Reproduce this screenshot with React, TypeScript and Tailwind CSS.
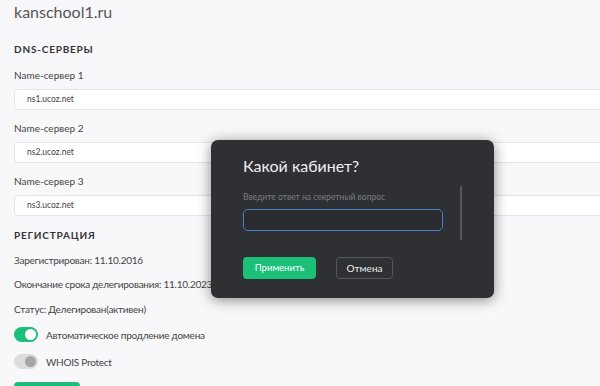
const servers = ["ns1.ucoz.net", "ns2.ucoz.net", "ns3.ucoz.net"];

const Toggle = ({ on }: { on: boolean }) => (
  <div
    className={`w-[24px] h-[15px] rounded-full flex items-center justify-end px-[2px] ${
      on ? "bg-[#1cbf78]" : "bg-[#dcdcdf]"
    }`}
  >
    <div className={`w-[11px] h-[11px] rounded-full ${on ? "bg-white" : "bg-[#a5a5aa]"}`} />
  </div>
);

export default function App() {
  return (
    <div
      className="relative w-[600px] h-[386px] overflow-hidden bg-[#f8f8fa] text-[#333]"
      style={{ fontFamily: 'Lato, "Open Sans", sans-serif' }}
    >
      <div className="pl-[14px] pt-[1px]">
        <h1 className="text-[16px] leading-[22px] text-[#555] font-normal">kanschool1.ru</h1>

        <h2 className="mt-[19px] text-[10px] leading-[14px] font-bold tracking-[0.8px] text-[#333]">
          DNS-СЕРВЕРЫ
        </h2>

        <div className="mt-[12px] flex flex-col gap-[11px]">
          {servers.map((s, i) => (
            <div key={s} className="flex flex-col gap-[7px]">
              <div className="text-[10px] leading-[14px] text-[#444]">Name-сервер {i + 1}</div>
              <div className="w-[700px] h-[21px] bg-white border border-[#e4e4e7] rounded-[4px] flex items-center pl-[12px] text-[8.5px] text-[#444]">
                {s}
              </div>
            </div>
          ))}
        </div>

        <h2 className="mt-[12px] text-[10px] leading-[14px] font-bold tracking-[0.8px] text-[#333]">
          РЕГИСТРАЦИЯ
        </h2>

        <div className="mt-[11px] flex flex-col text-[10px] leading-[14px] tracking-[-0.25px] text-[#444]">
          <div>Зарегистрирован: 11.10.2016</div>
          <div className="mt-[10px]">Окончание срока делегирования: 11.10.2023</div>
          <div className="mt-[11px]">Статус: Делегирован(активен)</div>
          <div className="mt-[11px] flex items-center gap-[8px]">
            <Toggle on />
            <span>Автоматическое продление домена</span>
          </div>
          <div className="mt-[12px] flex items-center gap-[8px]">
            <Toggle on={false} />
            <span>WHOIS Protect</span>
          </div>
          <div className="mt-[13px] w-[66px] h-[20px] bg-[#1cbf78] rounded-[4px]" />
        </div>
      </div>

      {/* modal */}
      <div className="absolute left-[211px] top-[140px] w-[283px] h-[158px] bg-[#2f3034] rounded-[7px] shadow-[0_2px_14px_rgba(0,0,0,0.45)] pl-[32px] pt-[16px]">
        <div className="text-[16px] leading-[20px] text-[#eeeeee]">Какой кабинет?</div>
        <div className="mt-[15px] text-[8.5px] leading-[12px] text-[#7b7c80]">
          Введите ответ на секретный вопрос
        </div>
        <div className="mt-[6px] w-[200px] h-[22px] rounded-[5px] border-[1.5px] border-[#4a7fcf] bg-[#2a2b2f]" />
        <div className="mt-[26px] flex gap-[20px]">
          <button className="w-[73px] h-[22px] rounded-[4px] bg-[#1cbf78] text-white text-[9.5px]">
            Применить
          </button>
          <button className="w-[57px] h-[22px] rounded-[4px] border border-[#55565a] text-[#eeeeee] text-[10px]">
            Отмена
          </button>
        </div>
        <div className="absolute left-[249px] top-[46px] w-[2px] h-[54px] bg-[#55565a] rounded-full" />
      </div>
    </div>
  );
}
